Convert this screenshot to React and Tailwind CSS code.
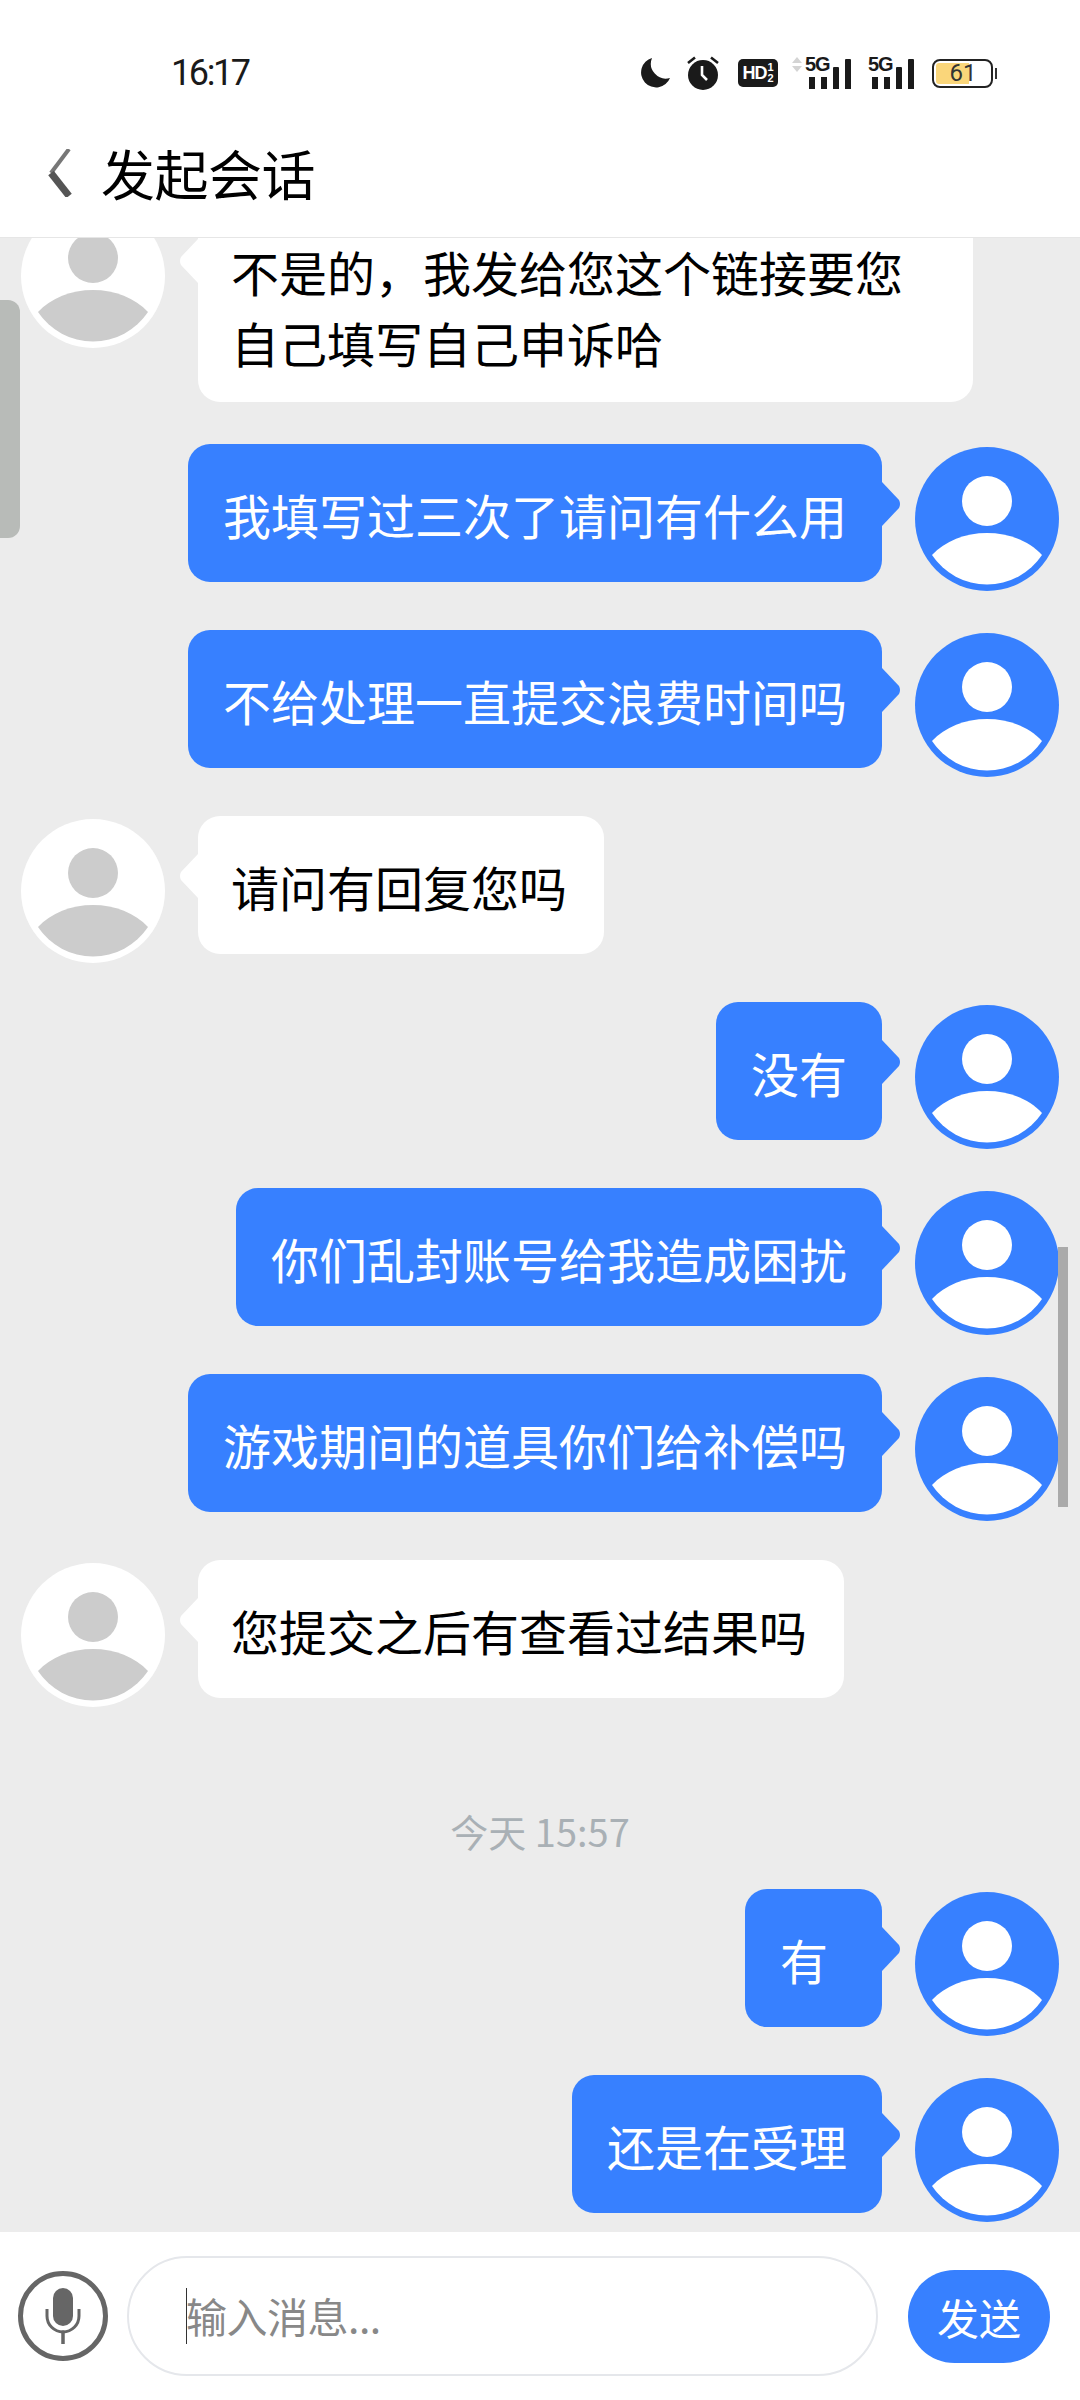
const FONT = '"Noto Sans CJK SC", "Noto Sans", sans-serif';

function Avatar({ mine }) {
  return (
    <svg viewBox="0 0 144 144" className="w-[144px] h-[144px] shrink-0 mt-[3px] mb-[-9px]">
      <circle cx="72" cy="72" r="72" fill={mine ? "#3780ff" : "#ffffff"} />
      <circle cx="72" cy="54" r="25" fill={mine ? "#ffffff" : "#cccccc"} />
      <path d="M17 108C30 94 50 86 72 86C94 86 114 94 127 108A66 66 0 0 1 17 108Z" fill={mine ? "#ffffff" : "#cccccc"} />
    </svg>
  );
}

function TailRight() {
  return (
    <svg viewBox="0 0 19 44" className="absolute left-full top-[38px] w-[19px] h-[44px]">
      <path d="M0 0L17 18Q19 22 17 26L0 44Z" fill="#3780ff" />
    </svg>
  );
}

function TailLeft() {
  return (
    <svg viewBox="0 0 19 44" className="absolute right-full top-[38px] w-[19px] h-[44px]">
      <path d="M19 0L2 18Q0 22 2 26L19 44Z" fill="#ffffff" />
    </svg>
  );
}

function Mine({ text }) {
  return (
    <div className="flex justify-end items-start mb-[48px] pr-[21px] gap-[33px]">
      <div className="relative bg-[#3780ff] text-white rounded-[22px] min-w-[137px] pl-[35px] pr-[35px] pt-[35px] pb-[32px] text-[48px] leading-[71px]">
        {text}
        <TailRight />
      </div>
      <Avatar mine />
    </div>
  );
}

function Theirs({ text, first }) {
  return (
    <div className={`flex justify-start items-start pl-[21px] gap-[33px] ${first ? "mb-[42px]" : "mb-[48px]"}`}>
      <Avatar />
      <div className={`relative bg-white text-black rounded-[22px] max-w-[775px] pl-[33px] pr-[37px] pt-[35px] text-[48px] leading-[71px] ${first ? "pb-[24px]" : "pb-[32px]"}`}>
        {text}
        <TailLeft />
      </div>
    </div>
  );
}

function Signal({ arrows }) {
  return (
    <div className="relative w-[46px] h-[32px]">
      {arrows && (
        <svg viewBox="0 0 10 16" className="absolute left-[-13px] top-[0px] w-[10px] h-[16px]">
          <path d="M5 0L10 6H0Z M0 9H10L5 15Z" fill="#d4d4d4" />
        </svg>
      )}
      <span className="absolute left-[0px] top-[-3px] text-[20px] leading-[20px] font-bold tracking-[-1px] text-[#1a1a1a]" style={{ fontFamily: '"Liberation Sans", sans-serif' }}>5G</span>
      <div className="absolute left-[4px] bottom-0 flex items-end gap-[6px]">
        <div className="w-[6px] h-[12px] bg-[#1a1a1a]" />
        <div className="w-[6px] h-[12px] bg-[#1a1a1a]" />
        <div className="w-[6px] h-[22px] bg-[#1a1a1a] rounded-t-[1px]" />
        <div className="w-[6px] h-[30px] bg-[#1a1a1a] rounded-t-[1px]" />
      </div>
    </div>
  );
}

function StatusBar() {
  return (
    <div className="flex items-center h-[120px] pt-[26px]">
      <div className="ml-[171px] text-[36px] leading-[40px] tracking-[-2.4px] text-[#1a1a1a]" style={{ fontFamily: 'Roboto, sans-serif' }}>16:17</div>
      <div className="ml-auto mr-[83px] flex items-center">
        <svg viewBox="0 0 30 30" className="w-[30px] h-[30px]">
          <path d="M12 0A15 15 0 1 0 30 20A15 15 0 0 1 12 0Z" fill="#1a1a1a" />
        </svg>
        <svg viewBox="0 0 32 34" className="w-[32px] h-[34px] ml-[17px]">
          <circle cx="16" cy="19" r="15" fill="#1a1a1a" />
          <path d="M15 10V19L20 24" stroke="#fff" strokeWidth="2.6" fill="none" />
          <path d="M1 7L8 1.5 M31 7L24 1.5" stroke="#1a1a1a" strokeWidth="2.6" />
        </svg>
        <div className="ml-[19px] w-[40px] h-[28px] rounded-[5px] bg-[#1a1a1a] text-white flex items-center justify-center font-bold" style={{ fontFamily: '"Liberation Sans", sans-serif' }}>
          <span className="text-[18px] leading-[18px] tracking-[-1px]">HD</span>
          <span className="flex flex-col text-[11px] leading-[11px] ml-[1px]">
            <span>1</span>
            <span>2</span>
          </span>
        </div>
        <div className="ml-[27px]"><Signal arrows /></div>
        <div className="ml-[17px]"><Signal /></div>
        <div className="relative ml-[18px] w-[61px] h-[29px] border-2 border-[#222222] rounded-[8px] overflow-hidden">
          <div className="absolute left-[2px] top-[2px] bottom-[2px] w-[33px] bg-[#fad67a] rounded-l-[3px]" />
          <div className="absolute inset-0 flex items-center justify-center pl-[1px] text-[24px] leading-[25px] text-[#333333]" style={{ fontFamily: 'Roboto, sans-serif' }}>61</div>
        </div>
        <div className="w-[2px] h-[11px] bg-[#333333] ml-[2px]" />
      </div>
    </div>
  );
}

function Header() {
  return (
    <div className="shrink-0 h-[238px] bg-white border-b border-[#e6e6e6]">
      <StatusBar />
      <div className="flex items-center h-[84px] mt-[11px]">
        <svg viewBox="0 0 24 48" className="ml-[48px] w-[24px] h-[48px]">
          <path d="M21 0L3 24" stroke="#777777" strokeWidth="4" fill="none" />
          <path d="M3 24L21 47" stroke="#555555" strokeWidth="7" fill="none" />
        </svg>
        <div className="ml-[29px] text-[54px] leading-[70px] tracking-[-0.5px] text-black">发起会话</div>
      </div>
    </div>
  );
}

function Composer() {
  return (
    <div className="shrink-0 h-[168px] bg-white flex items-center pl-[18px]">
      <div className="w-[90px] h-[90px] rounded-full border-[5px] border-[#666666] flex items-center justify-center shrink-0">
        <svg viewBox="0 0 36 56" className="w-[36px] h-[56px]">
          <rect x="8" y="0" width="20" height="38" rx="10" fill="#666666" />
          <path d="M2 21V28A16 16 0 0 0 34 28V21" stroke="#666666" strokeWidth="3" fill="none" />
          <path d="M18 44V56" stroke="#666666" strokeWidth="3.5" strokeLinecap="round" />
        </svg>
      </div>
      <div className="ml-[19px] w-[751px] h-[120px] rounded-[60px] border-2 border-[#e5e7eb] flex items-center pl-[57px] shrink-0">
        <div className="w-[1px] h-[56px] bg-[#333333] shrink-0" />
        <span className="text-[41px] leading-[56px] tracking-[-0.5px] text-[#888888] ml-[-1px] mt-[-2px]">输入消息...</span>
      </div>
      <div className="ml-[30px] w-[142px] h-[93px] rounded-full bg-[#3780ff] text-white text-[42px] flex items-center justify-center shrink-0">发送</div>
    </div>
  );
}

export default function App() {
  return (
    <div className="relative w-[1080px] h-[2400px] overflow-hidden flex flex-col bg-[#ececec]" style={{ fontFamily: FONT }}>
      <Header />
      <div className="flex-1 overflow-hidden">
        <div className="mt-[-37px] flex flex-col">
          <Theirs first text="不是的，我发给您这个链接要您自己填写自己申诉哈" />
          <Mine text="我填写过三次了请问有什么用" />
          <Mine text="不给处理一直提交浪费时间吗" />
          <Theirs text="请问有回复您吗" />
          <Mine text="没有" />
          <Mine text="你们乱封账号给我造成困扰" />
          <Mine text="游戏期间的道具你们给补偿吗" />
          <Theirs text="您提交之后有查看过结果吗" />
          <div className="mt-[58px] mb-[31px] h-[54px] text-center text-[38px] leading-[54px] text-[#a9b0b5]">今天 15:57</div>
          <Mine text="有" />
          <Mine text="还是在受理" />
        </div>
      </div>
      <Composer />
      <div className="absolute left-0 top-[300px] w-[20px] h-[238px] bg-[#b8bbb8] rounded-r-[12px]" />
      <div className="absolute left-[1058px] top-[1247px] w-[10px] h-[260px] bg-[#aaaaaa]" />
    </div>
  );
}
